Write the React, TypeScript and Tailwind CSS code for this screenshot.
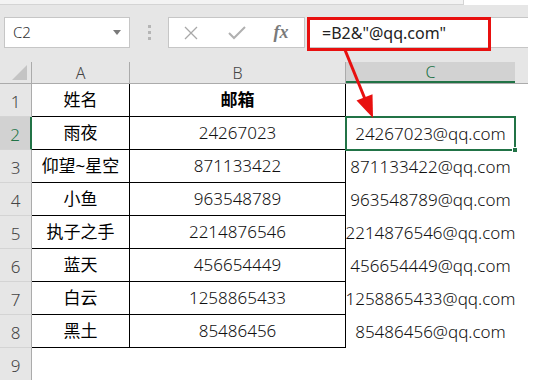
import React from 'react';

type Row = { n: number; name: string; mail: string; bold?: boolean };

const rows: Row[] = [
  { n: 1, name: '姓名', mail: '邮箱', bold: true },
  { n: 2, name: '雨夜', mail: '24267023' },
  { n: 3, name: '仰望~星空', mail: '871133422' },
  { n: 4, name: '小鱼', mail: '963548789' },
  { n: 5, name: '执子之手', mail: '2214876546' },
  { n: 6, name: '蓝天', mail: '456654449' },
  { n: 7, name: '白云', mail: '1258865433' },
  { n: 8, name: '黑土', mail: '85486456' },
];

const cellFont = { fontFamily: '"Noto Sans", "Noto Sans CJK SC", sans-serif' };

export default function App() {
  return (
    <div className="relative w-[554px] h-[390px] bg-white overflow-hidden" style={cellFont}>
      <div className="w-[528px] h-[380px] bg-[#e6e6e6] flex flex-col">
        {/* top strip */}
        <div className="h-[5px] bg-[#f3f3f3] border-b border-[#d4d4d4] flex justify-end">
          <div className="w-[65px] h-[5px] bg-white border-l border-[#d4d4d4]" />
        </div>

        {/* formula bar */}
        <div className="h-[57px] flex items-start pt-[12px]">
          <div className="ml-[4px] w-[126px] h-[31px] bg-white border border-[#c6c6c6] flex items-center justify-between pl-[8px] pr-[8px]">
            <span className="text-[15px] text-[#333] font-light">C2</span>
            <svg width="8" height="5" viewBox="0 0 8 5"><path d="M0 0h8L4 5z" fill="#7a7a7a" /></svg>
          </div>
          <div className="w-[38px] h-[31px] flex flex-col items-center justify-center gap-[3px]">
            <div className="w-[3px] h-[3px] bg-[#b5b5b5]" />
            <div className="w-[3px] h-[3px] bg-[#b5b5b5]" />
            <div className="w-[3px] h-[3px] bg-[#b5b5b5]" />
          </div>
          <div className="w-[137px] h-[31px] bg-white border border-[#c6c6c6] flex items-center">
            <div className="w-[44px] flex justify-center">
              <svg width="14" height="14" viewBox="0 0 14 14"><path d="M1 1l12 12M13 1L1 13" stroke="#a8a8a8" strokeWidth="1.3" /></svg>
            </div>
            <div className="w-[48px] flex justify-center">
              <svg width="18" height="14" viewBox="0 0 18 14"><path d="M1 7l5 5L17 1" stroke="#b0b0b0" strokeWidth="2" fill="none" /></svg>
            </div>
            <div className="w-[40px] flex justify-center">
              <span className="text-[18px] italic font-bold text-[#7a7a7a]" style={{ fontFamily: '"Liberation Serif", serif' }}>fx</span>
            </div>
          </div>
          <div className="ml-[4px] flex-1 h-[31px] bg-white border-t border-b border-l border-[#c6c6c6] flex items-center pl-[12px]">
            <span className="text-[16px] text-[#222]">=B2&amp;"@qq.com"</span>
          </div>
        </div>

        {/* column headers */}
        <div className="flex h-[22px] border-b border-[#ababab] text-[16px] text-[#444]">
          <div className="w-[32px] border-r border-[#ababab] flex items-end justify-end pr-[4px] pb-[3px]">
            <svg width="15" height="15" viewBox="0 0 15 15"><path d="M15 0v15H0z" fill="#c4c4c4" /></svg>
          </div>
          <div className="w-[98px] border-r border-[#ababab] flex items-center justify-center font-light">A</div>
          <div className="w-[216px] border-r border-[#ababab] flex items-center justify-center font-light">B</div>
          <div className="w-[169px] bg-[#d2d2d2] border-b-2 border-[#217346] flex items-center justify-center text-[#217346] font-light">C</div>
          <div className="flex-1" />
        </div>

        {/* rows */}
        <div className="flex-1 flex flex-col bg-white">
          {rows.map((r) => (
            <div key={r.n} className="flex h-[33px]">
              <div
                className={
                  r.n === 2
                    ? 'w-[32px] bg-[#d2d2d2] border-r-2 border-[#217346] border-b border-b-[#d4d4d4] flex items-end justify-center pb-[2px] text-[17px] text-[#217346] font-light'
                    : 'w-[32px] bg-[#e6e6e6] border-r border-[#ababab] border-b border-b-[#d4d4d4] flex items-end justify-center pb-[2px] text-[17px] text-[#444] font-light'
                }
              >
                {r.n}
              </div>
              <div className="w-[98px] border-r border-b border-black flex items-center justify-center text-[17px] text-black">
                {r.name}
              </div>
              <div
                className={
                  r.bold
                    ? 'w-[216px] border-r border-b border-black flex items-center justify-center text-[17px] text-black font-bold'
                    : 'w-[216px] border-r border-b border-black flex items-center justify-center text-[17px] text-[#111] font-light'
                }
              >
                {r.mail}
              </div>
              <div className="w-[169px] flex items-center justify-center text-[17px] text-[#111] font-light whitespace-nowrap">
                <span className="shrink-0">{r.n === 1 ? '' : r.mail + '@qq.com'}</span>
              </div>
              <div className="flex-1" />
            </div>
          ))}
          <div className="flex flex-1">
            <div className="w-[32px] bg-[#e6e6e6] border-r border-[#ababab] flex items-end justify-center pb-[2px] text-[17px] text-[#444] font-light">
              9
            </div>
          </div>
        </div>
      </div>

      {/* selected cell C2 */}
      <div className="absolute left-[345px] top-[116px] w-[171px] h-[35px] border-2 border-[#217346]" />
      <div className="absolute left-[512px] top-[147px] w-[6px] h-[6px] bg-[#217346] border border-white" />

      {/* red highlight on formula */}
      <div className="absolute left-[307px] top-[17px] w-[184px] h-[34px] border-[3px] border-[#e8100f]" />

      {/* arrow */}
      <svg className="absolute left-0 top-0" width="554" height="390" viewBox="0 0 554 390">
        <line x1="345" y1="50" x2="365" y2="99" stroke="#e8100f" strokeWidth="3" />
        <path d="M373 118 L356.5 100.5 L372.5 94.2 Z" fill="#e8100f" />
      </svg>
    </div>
  );
}
